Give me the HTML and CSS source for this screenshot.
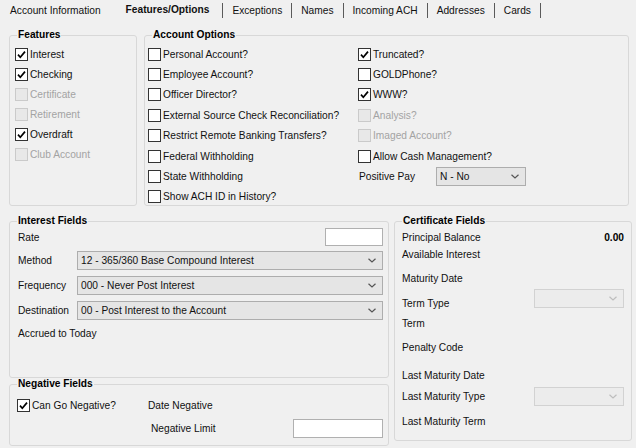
FILE: index.html
```html
<!DOCTYPE html>
<html>
<head>
<meta charset="utf-8">
<link rel="stylesheet" href="styles.css">
</head>
<body>
<nav class="tabs">
  <span class="tab first">Account Information</span>
  <span class="tab active">Features/Options</span>
  <span class="tab">Exceptions</span>
  <span class="tab">Names</span>
  <span class="tab">Incoming ACH</span>
  <span class="tab">Addresses</span>
  <span class="tab">Cards</span>
</nav>
<main class="page">
  <div class="top-row">
    <fieldset class="group features">
      <legend>Features</legend>
      <div class="body features-body">
        <label class="check"><span class="box"><svg viewBox="0 0 11 11"><path d="M2 5.6 L4.3 8.2 L9 2.6"/></svg></span>Interest</label>
        <label class="check"><span class="box"><svg viewBox="0 0 11 11"><path d="M2 5.6 L4.3 8.2 L9 2.6"/></svg></span>Checking</label>
        <label class="check disabled"><span class="box"></span>Certificate</label>
        <label class="check disabled"><span class="box"></span>Retirement</label>
        <label class="check"><span class="box"><svg viewBox="0 0 11 11"><path d="M2 5.6 L4.3 8.2 L9 2.6"/></svg></span>Overdraft</label>
        <label class="check disabled"><span class="box"></span>Club Account</label>
      </div>
    </fieldset>
    <fieldset class="group options">
      <legend>Account Options</legend>
      <div class="body options-body">
        <label class="check"><span class="box"></span>Personal Account?</label>
        <label class="check"><span class="box"></span>Employee Account?</label>
        <label class="check"><span class="box"></span>Officer Director?</label>
        <label class="check"><span class="box"></span>External Source Check Reconciliation?</label>
        <label class="check"><span class="box"></span>Restrict Remote Banking Transfers?</label>
        <label class="check"><span class="box"></span>Federal Withholding</label>
        <label class="check"><span class="box"></span>State Withholding</label>
        <label class="check"><span class="box"></span>Show ACH ID in History?</label>
        <label class="check"><span class="box"><svg viewBox="0 0 11 11"><path d="M2 5.6 L4.3 8.2 L9 2.6"/></svg></span>Truncated?</label>
        <label class="check"><span class="box"></span>GOLDPhone?</label>
        <label class="check"><span class="box"><svg viewBox="0 0 11 11"><path d="M2 5.6 L4.3 8.2 L9 2.6"/></svg></span>WWW?</label>
        <label class="check disabled"><span class="box"></span>Analysis?</label>
        <label class="check disabled"><span class="box"></span>Imaged Account?</label>
        <label class="check"><span class="box"></span>Allow Cash Management?</label>
        <div class="pospay">
          <span class="pospay-label">Positive Pay</span>
          <div class="combo pospay-combo"><span class="combo-text">N - No</span><svg class="chev" viewBox="0 0 8 5"><path d="M0.5 0.8 L4 4 L7.5 0.8"/></svg></div>
        </div>
      </div>
    </fieldset>
  </div>
  <div class="bottom-row">
    <div class="left-col">
      <fieldset class="group interest">
        <legend>Interest Fields</legend>
        <div class="body interest-body">
          <div class="field-row rate-row">
            <span class="lbl">Rate</span>
            <span class="textbox rate-box"></span>
          </div>
          <div class="field-row sel-row">
            <span class="lbl">Method</span>
            <div class="combo wide"><span class="combo-text">12 - 365/360 Base Compound Interest</span><svg class="chev" viewBox="0 0 8 5"><path d="M0.5 0.8 L4 4 L7.5 0.8"/></svg></div>
          </div>
          <div class="field-row sel-row">
            <span class="lbl">Frequency</span>
            <div class="combo wide"><span class="combo-text">000 - Never Post Interest</span><svg class="chev" viewBox="0 0 8 5"><path d="M0.5 0.8 L4 4 L7.5 0.8"/></svg></div>
          </div>
          <div class="field-row sel-row">
            <span class="lbl">Destination</span>
            <div class="combo wide"><span class="combo-text">00 - Post Interest to the Account</span><svg class="chev" viewBox="0 0 8 5"><path d="M0.5 0.8 L4 4 L7.5 0.8"/></svg></div>
          </div>
          <div class="field-row accrued-row">
            <span class="lbl">Accrued to Today</span>
          </div>
        </div>
      </fieldset>
      <fieldset class="group negative">
        <legend>Negative Fields</legend>
        <div class="body negative-body">
          <label class="check neg-check"><span class="box"><svg viewBox="0 0 11 11"><path d="M2 5.6 L4.3 8.2 L9 2.6"/></svg></span>Can Go Negative?</label>
          <span class="neg-date">Date Negative</span>
          <span class="neg-limit">Negative Limit</span>
          <span class="textbox limit-box"></span>
        </div>
      </fieldset>
    </div>
    <fieldset class="group cert">
      <legend>Certificate Fields</legend>
      <div class="body cert-body">
        <span class="lbl">Principal Balance</span>
        <span class="val amount">0.00</span>
        <span class="lbl">Available Interest</span>
        <span class="lbl">Maturity Date</span>
        <span class="lbl">Term Type</span>
        <div class="val combo disabled term-combo"><span class="combo-text"></span><svg class="chev" viewBox="0 0 8 5"><path d="M0.5 0.8 L4 4 L7.5 0.8"/></svg></div>
        <span class="lbl">Term</span>
        <span class="lbl">Penalty Code</span>
        <span class="lbl">Last Maturity Date</span>
        <span class="lbl">Last Maturity Type</span>
        <div class="val combo disabled"><span class="combo-text"></span><svg class="chev" viewBox="0 0 8 5"><path d="M0.5 0.8 L4 4 L7.5 0.8"/></svg></div>
        <span class="lbl">Last Maturity Term</span>
      </div>
    </fieldset>
  </div>
</main>
</body>
</html>
```
FILE: styles.css
```css
* { box-sizing: border-box; }
html, body {
  margin: 0;
  background: #f0f0f0;
  color: #111;
  font-family: "Liberation Sans", Arial, sans-serif;
  font-size: 10.2px;
}
.tabs {
  display: flex;
  height: 21px;
  align-items: flex-start;
}
.tab {
  margin-top: 3px;
  height: 15px;
  line-height: 15px;
  padding: 0 9px;
  border-right: 1px solid #5a5a5a;
  white-space: nowrap;
}
.tab.first {
  padding: 0 16px 0 10px;
  border-right: none;
}
.tab.active {
  font-weight: bold;
  line-height: 13px;
  padding: 0 13px 0 9px;
}
.page {
  padding: 8px 0 0 9px;
}
.top-row {
  display: flex;
  gap: 7px;
  height: 177px;
}
.group {
  margin: 0;
  padding: 0;
  min-width: 0;
  border: 1px solid #d8d8d8;
  border-radius: 3px;
}
.group legend {
  margin-left: 7px;
  padding: 0 1px;
  font-weight: bold;
  line-height: 12px;
  color: #000;
}
.features { width: 128px; }
.options { width: 485px; }
.features-body { padding: 3px 0 0 5px; }
.check {
  display: flex;
  align-items: center;
  gap: 2px;
  height: 20px;
  white-space: nowrap;
}
.box {
  width: 13px;
  height: 13px;
  flex: none;
  border: 1px solid #333;
  background: #fff;
  display: flex;
}
.box svg {
  width: 11px;
  height: 11px;
  fill: none;
  stroke: #000;
  stroke-width: 1.7;
}
.check.disabled { color: #a3a3a3; }
.check.disabled .box {
  border-color: #cacaca;
  background: #e8e8e8;
}
.options-body {
  padding: 3px 0 0 3px;
  display: grid;
  grid-template-columns: 210px 1fr;
  grid-template-rows: repeat(8, 20.4px);
  grid-auto-flow: column;
}
.options-body .check { height: 20.4px; }
.pospay {
  display: flex;
  align-items: center;
  padding-left: 1px;
}
.pospay-label { width: 77px; }
.combo {
  height: 19px;
  border: 1px solid #adadad;
  background: #e5e5e5;
  display: flex;
  align-items: center;
  padding: 0 6px 0 3px;
}
.combo-text { flex: 1; white-space: nowrap; }
.chev {
  width: 8px;
  height: 5px;
  fill: none;
  stroke: #555;
  stroke-width: 1.2;
}
.combo.disabled {
  background: #ececec;
  border-color: #d2d2d2;
}
.combo.disabled .chev { stroke: #bdbdbd; }
.pospay-combo { width: 90px; }
.bottom-row {
  display: flex;
  gap: 5px;
  margin-top: 9px;
}
.left-col {
  width: 380px;
  display: flex;
  flex-direction: column;
}
.interest { height: 163px; }
.negative { height: 68px; }
.interest-body { padding: 0 5px 0 8px; }
.field-row {
  display: flex;
  align-items: center;
}
.field-row .lbl { width: 59px; white-space: nowrap; }
.rate-row { height: 20px; }
.rate-box { margin-left: auto; }
.textbox {
  display: block;
  background: #fff;
  border: 1px solid #b0b0b0;
}
.rate-box { width: 58px; height: 18px; }
.sel-row { margin-top: 4px; }
.sel-row + .sel-row { margin-top: 6px; }
.combo.wide { flex: 1; }
.accrued-row { margin-top: 3px; height: 20px; }
.negative-body {
  padding: 5px 5px 0 7px;
  display: grid;
  grid-template-columns: 131px 1fr auto;
  grid-template-rows: 20px 20px;
  row-gap: 3px;
  align-items: center;
}
.neg-date { grid-column: 2 / 4; }
.neg-limit { grid-column: 2; grid-row: 2; padding-left: 3px; }
.limit-box { grid-column: 3; grid-row: 2; width: 90px; height: 19px; }
.cert { width: 238px; height: 226px; }
.cert-body {
  padding: 2px 7px 0 7px;
  display: grid;
  grid-template-columns: 1fr 90px;
  grid-template-rows: 16px 18px 30px 20px 20px 28px 28px 14px 36px;
  align-items: center;
}
.cert-body .lbl { grid-column: 1; white-space: nowrap; }
.cert-body .val { grid-column: 2; }
.amount { justify-self: end; font-weight: bold; color: #000; }
.term-combo { align-self: start; margin-top: -4px; }
```
